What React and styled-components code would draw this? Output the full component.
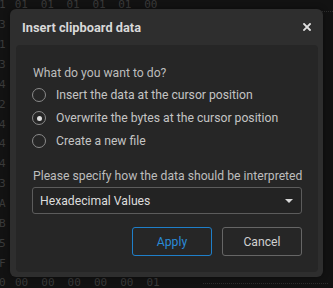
import React from "react";
import styled, { createGlobalStyle } from "styled-components";

const Global = createGlobalStyle`
  html, body { margin: 0; padding: 0; background: #121212; }
  body { width: 333px; height: 288px; overflow: hidden; font-family: Roboto, "Liberation Sans", sans-serif; }
`;

const Page = styled.div`
  position: relative;
  width: 333px;
  height: 288px;
  background: #121212;
  overflow: hidden;
`;

const HexView = styled.div`
  display: flex;
  flex-direction: column;
  justify-content: space-between;
  height: 298px;
  margin-top: -5px;
  font-family: "DejaVu Sans Mono", "Liberation Mono", monospace;
  font-size: 11px;
  color: #3a3a3a;
`;

const HexRow = styled.div`
  display: flex;
  align-items: center;
  height: 20px;
`;

const Addr = styled.span`
  width: 16px;
  margin-left: -1px;
`;

const Byte = styled.span`
  width: 26.3px;
`;

const Dots = styled.span`
  margin-left: ${(p) => p.$offset}px;
  width: 125px;
  height: 1px;
  border-bottom: 1px dotted #2e2e2e;
  align-self: ${(p) => (p.$top ? "flex-end" : "center")};
  margin-bottom: ${(p) => (p.$top ? "3px" : "0")};
`;

const Overlay = styled.div`
  position: absolute;
  left: 10px;
  top: 9px;
  width: 313px;
  height: 268px;
  background: #2e2e2e;
  border-radius: 6px;
  display: flex;
  flex-direction: column;
  box-shadow: 0 0 6px rgba(0, 0, 0, 0.4);
`;

const Header = styled.div`
  height: 36px;
  display: flex;
  align-items: center;
  justify-content: space-between;
  padding: 0 12px 0 12px;
`;

const Title = styled.div`
  font-size: 12.8px;
  font-weight: 700;
  color: #d8d8d8;
`;

const Close = styled.div`
  width: 8px;
  height: 8px;
  display: flex;
  align-items: center;
  justify-content: center;
`;

const Panel = styled.div`
  flex: 1;
  margin: 0 5px 5px 6px;
  background: #262626;
  border-radius: 4px;
  padding: 21px 16px 0 16px;
  display: flex;
  flex-direction: column;
`;

const Label = styled.div`
  font-size: 12.2px;
  color: #bdbdbd;
  line-height: 14px;
  margin-left: 1px;
  white-space: nowrap;
`;

const RadioList = styled.div`
  display: flex;
  flex-direction: column;
  gap: 9px;
  margin-top: 8px;
`;

const RadioRow = styled.div`
  display: flex;
  align-items: center;
  gap: 10px;
  height: 14px;
`;

const Circle = styled.div`
  width: 12px;
  height: 12px;
  border-radius: 50%;
  border: 1px solid #8a8a8a;
  display: flex;
  align-items: center;
  justify-content: center;
  flex-shrink: 0;
  &::after {
    content: "";
    width: 5px;
    height: 5px;
    border-radius: 50%;
    background: ${(p) => (p.$checked ? "#e0e0e0" : "transparent")};
  }
`;

const RadioLabel = styled.span`
  font-size: 12.2px;
  color: #c4c4c4;
  white-space: nowrap;
`;

const SecondLabel = styled(Label)`
  margin-top: 21px;
`;

const Select = styled.div`
  margin-top: 4px;
  height: 25px;
  border: 1px solid #5c5c5c;
  border-radius: 3px;
  background: #232323;
  display: flex;
  align-items: center;
  justify-content: space-between;
  padding: 0 8px 0 7px;
  font-size: 12.2px;
  color: #dcdcdc;
`;

const Caret = styled.div`
  width: 0;
  height: 0;
  border-left: 4px solid transparent;
  border-right: 4px solid transparent;
  border-top: 4px solid #d8d8d8;
`;

const Buttons = styled.div`
  display: flex;
  justify-content: flex-end;
  gap: 10px;
  margin-top: 13px;
`;

const Button = styled.button`
  width: 80px;
  height: 29px;
  border-radius: 3px;
  background: transparent;
  border: 1px solid ${(p) => (p.$primary ? "#1f7fc9" : "#666666")};
  color: ${(p) => (p.$primary ? "#2a8ad6" : "#d0d0d0")};
  font-family: Roboto, "Liberation Sans", sans-serif;
  font-size: 12.2px;
  padding: 0;
`;

const bytesTop = ["01", "01", "01", "01", "01", "00"];
const bytesBottom = ["00", "00", "00", "00", "00", "01"];
const addrs = ["1", "3", "1", "3", "4", "2", "4", "4", "4", "3", "A", "B", "5", "F", "0"];

export default function App() {
  return (
    <Page>
      <Global />
      <HexView>
        {addrs.map((a, i) => (
          <HexRow key={i}>
            <Addr>{a}</Addr>
            {i === 0 && bytesTop.map((b, j) => <Byte key={j}>{b}</Byte>)}
            {i === 0 && <Dots $offset={40} $top />}
            {i === addrs.length - 1 && bytesBottom.map((b, j) => <Byte key={j}>{b}</Byte>)}
            {i === addrs.length - 1 && <Dots $offset={30} />}
          </HexRow>
        ))}
      </HexView>
      <Overlay>
        <Header>
          <Title>Insert clipboard data</Title>
          <Close>
            <svg width="8" height="8" viewBox="0 0 8 8">
              <path d="M1 1L7 7M7 1L1 7" stroke="#e0e0e0" strokeWidth="1.8" strokeLinecap="square" />
            </svg>
          </Close>
        </Header>
        <Panel>
          <Label>What do you want to do?</Label>
          <RadioList>
            <RadioRow>
              <Circle />
              <RadioLabel>Insert the data at the cursor position</RadioLabel>
            </RadioRow>
            <RadioRow>
              <Circle $checked />
              <RadioLabel>Overwrite the bytes at the cursor position</RadioLabel>
            </RadioRow>
            <RadioRow>
              <Circle />
              <RadioLabel>Create a new file</RadioLabel>
            </RadioRow>
          </RadioList>
          <SecondLabel>Please specify how the data should be interpreted</SecondLabel>
          <Select>
            <span>Hexadecimal Values</span>
            <Caret />
          </Select>
          <Buttons>
            <Button $primary>Apply</Button>
            <Button>Cancel</Button>
          </Buttons>
        </Panel>
      </Overlay>
    </Page>
  );
}
